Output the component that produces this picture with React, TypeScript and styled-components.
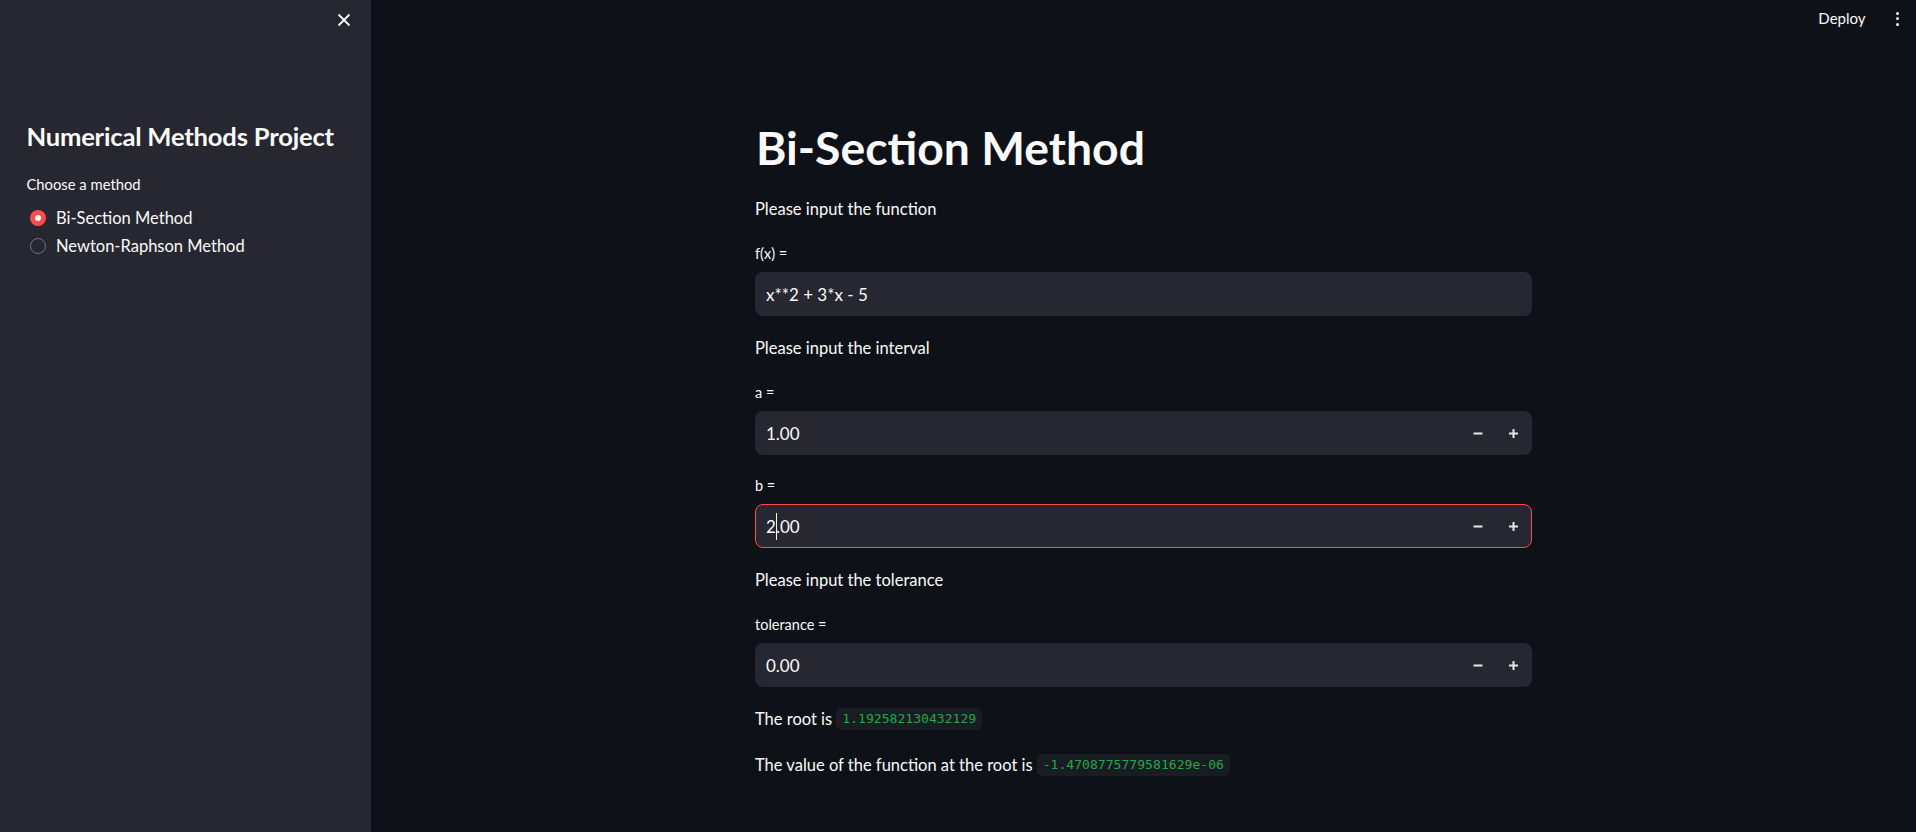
import React from "react";
import styled, { createGlobalStyle } from "styled-components";

const Global = createGlobalStyle`
  html, body { margin: 0; padding: 0; background: #0e1117; }
  body { font-family: Lato, "Noto Sans", sans-serif; color: #fafafa; overflow: hidden; }
  * { box-sizing: border-box; }
`;

const Shell = styled.div`
  display: flex;
  width: 100vw;
  height: 100vh;
`;

const Sidebar = styled.aside`
  width: 371px;
  flex: none;
  background: #262730;
  display: flex;
  flex-direction: column;
  padding: 0 26.4px;
`;

const SideTop = styled.div`
  height: 40px;
  display: flex;
  justify-content: flex-end;
  align-items: center;
  margin-right: -13px;
`;

const CloseBtn = styled.button`
  width: 28px;
  height: 28px;
  border: none;
  background: transparent;
  padding: 0;
  display: flex;
  align-items: center;
  justify-content: center;
  color: #fafafa;
`;

const SideTitle = styled.h2`
  margin: 80.7px 0 0;
  font-size: 25.6px;
  line-height: 1.2;
  font-weight: 700;
  letter-spacing: -0.2px;
`;

const SideLabel = styled.div`
  margin-top: 20.5px;
  font-size: 14.8px;
  line-height: 24px;
  height: 24px;
`;

const RadioList = styled.div`
  margin-top: 8px;
  display: flex;
  flex-direction: column;
`;

const RadioRow = styled.label`
  height: 28px;
  display: flex;
  align-items: center;
  gap: 10px;
  padding-left: 3.6px;
  font-size: 16.5px;
`;

const RadioDot = styled.span<{ $on?: boolean }>`
  width: 16px;
  height: 16px;
  border-radius: 50%;
  flex: none;
  display: flex;
  align-items: center;
  justify-content: center;
  background: ${(p) => (p.$on ? "#ff4b4b" : "transparent")};
  border: ${(p) => (p.$on ? "none" : "1px solid rgba(250,250,250,0.35)")};
  &::after {
    content: "";
    width: 6px;
    height: 6px;
    border-radius: 50%;
    background: ${(p) => (p.$on ? "#ffffff" : "transparent")};
  }
`;

const Main = styled.main`
  flex: 1;
  display: flex;
  flex-direction: column;
  min-width: 0;
`;

const Header = styled.header`
  height: 36px;
  flex: none;
  display: flex;
  justify-content: flex-end;
  align-items: center;
  gap: 30px;
  padding-right: 17.5px;
`;

const DeployBtn = styled.span`
  font-size: 15px;
  color: #fafafa;
`;

const Dots = styled.span`
  display: flex;
  flex-direction: column;
  gap: 2.5px;
  margin-top: 1px;
  & > i {
    width: 3px;
    height: 3px;
    border-radius: 50%;
    background: #fafafa;
  }
`;

const Content = styled.div`
  width: 777px;
  margin: 0 auto;
  padding-top: 83.6px;
  display: flex;
  flex-direction: column;
  gap: 18px;
`;

const Title = styled.h1`
  margin: 0 0 2px;
  font-size: 46.3px;
  line-height: 1.2;
  font-weight: 700;
  padding-left: 1px;
`;

const Para = styled.p`
  margin: 0;
  font-size: 16.5px;
  line-height: 28px;
  height: 28px;
  display: flex;
  align-items: center;
  white-space: pre;
`;

const Widget = styled.div`
  display: flex;
  flex-direction: column;
`;

const Label = styled.div`
  font-size: 14.5px;
  line-height: 26px;
  height: 26px;
  margin-bottom: 5px;
`;

const Field = styled.div<{ $focus?: boolean; $h: number }>`
  height: ${(p) => p.$h}px;
  background: #262730;
  border-radius: 8px;
  border: 1px solid ${(p) => (p.$focus ? "#ff4b4b" : "transparent")};
  display: flex;
  align-items: center;
`;

const Value = styled.div`
  flex: 1;
  padding-left: 10px;
  font-size: 17px;
  display: flex;
  align-items: center;
  white-space: pre;
`;

const Caret = styled.span`
  display: inline-block;
  width: 1px;
  height: 27px;
  background: #fafafa;
  margin: 0 -1px 0 0;
`;

const Step = styled.button`
  width: 35px;
  height: 100%;
  border: none;
  background: transparent;
  padding: 0;
  display: flex;
  align-items: center;
  justify-content: center;
  color: #fafafa;
`;

const Code = styled.code`
  font-family: "DejaVu Sans Mono", "Liberation Mono", monospace;
  font-size: 13.1px;
  color: #22a845;
  background: #1a1c24;
  border-radius: 5px;
  padding: 0 6px;
  height: 22px;
  line-height: 22px;
  margin-left: 4px;
`;

const Minus = () => (
  <svg width="11" height="11" viewBox="0 0 11 11">
    <rect x="0.5" y="4.5" width="9" height="2" fill="#e6e6e6" />
  </svg>
);
const Plus = () => (
  <svg width="11" height="11" viewBox="0 0 11 11">
    <rect x="1" y="4.5" width="9" height="2" fill="#e6e6e6" />
    <rect x="4.5" y="1" width="2" height="9" fill="#e6e6e6" />
  </svg>
);

function NumberField({ children, focus }: { children: React.ReactNode; focus?: boolean }) {
  return (
    <Field $h={44} $focus={focus}>
      <Value>{children}</Value>
      <Step aria-label="decrement">
        <Minus />
      </Step>
      <Step aria-label="increment">
        <Plus />
      </Step>
    </Field>
  );
}

export default function App() {
  return (
    <>
      <Global />
      <Shell>
        <Sidebar>
          <SideTop>
            <CloseBtn aria-label="close">
              <svg width="14" height="14" viewBox="0 0 14 14">
                <path d="M1.5 1.5 L12.5 12.5 M12.5 1.5 L1.5 12.5" stroke="#fafafa" strokeWidth="1.8" />
              </svg>
            </CloseBtn>
          </SideTop>
          <SideTitle>Numerical Methods Project</SideTitle>
          <SideLabel>Choose a method</SideLabel>
          <RadioList>
            <RadioRow>
              <RadioDot $on />
              Bi-Section Method
            </RadioRow>
            <RadioRow>
              <RadioDot />
              Newton-Raphson Method
            </RadioRow>
          </RadioList>
        </Sidebar>
        <Main>
          <Header>
            <DeployBtn>Deploy</DeployBtn>
            <Dots>
              <i />
              <i />
              <i />
            </Dots>
          </Header>
          <Content>
            <Title>Bi-Section Method</Title>
            <Para>Please input the function</Para>
            <Widget>
              <Label>f(x) =</Label>
              <Field $h={44}>
                <Value>x**2 + 3*x - 5</Value>
              </Field>
            </Widget>
            <Para>Please input the interval</Para>
            <Widget>
              <Label>a =</Label>
              <NumberField>1.00</NumberField>
            </Widget>
            <Widget>
              <Label>b =</Label>
              <NumberField focus>
                2<Caret />.00
              </NumberField>
            </Widget>
            <Para>Please input the tolerance</Para>
            <Widget>
              <Label>tolerance =</Label>
              <NumberField>0.00</NumberField>
            </Widget>
            <Para>
              The root is<Code>1.192582130432129</Code>
            </Para>
            <Para>
              The value of the function at the root is<Code>-1.4708775779581629e-06</Code>
            </Para>
          </Content>
        </Main>
      </Shell>
    </>
  );
}
